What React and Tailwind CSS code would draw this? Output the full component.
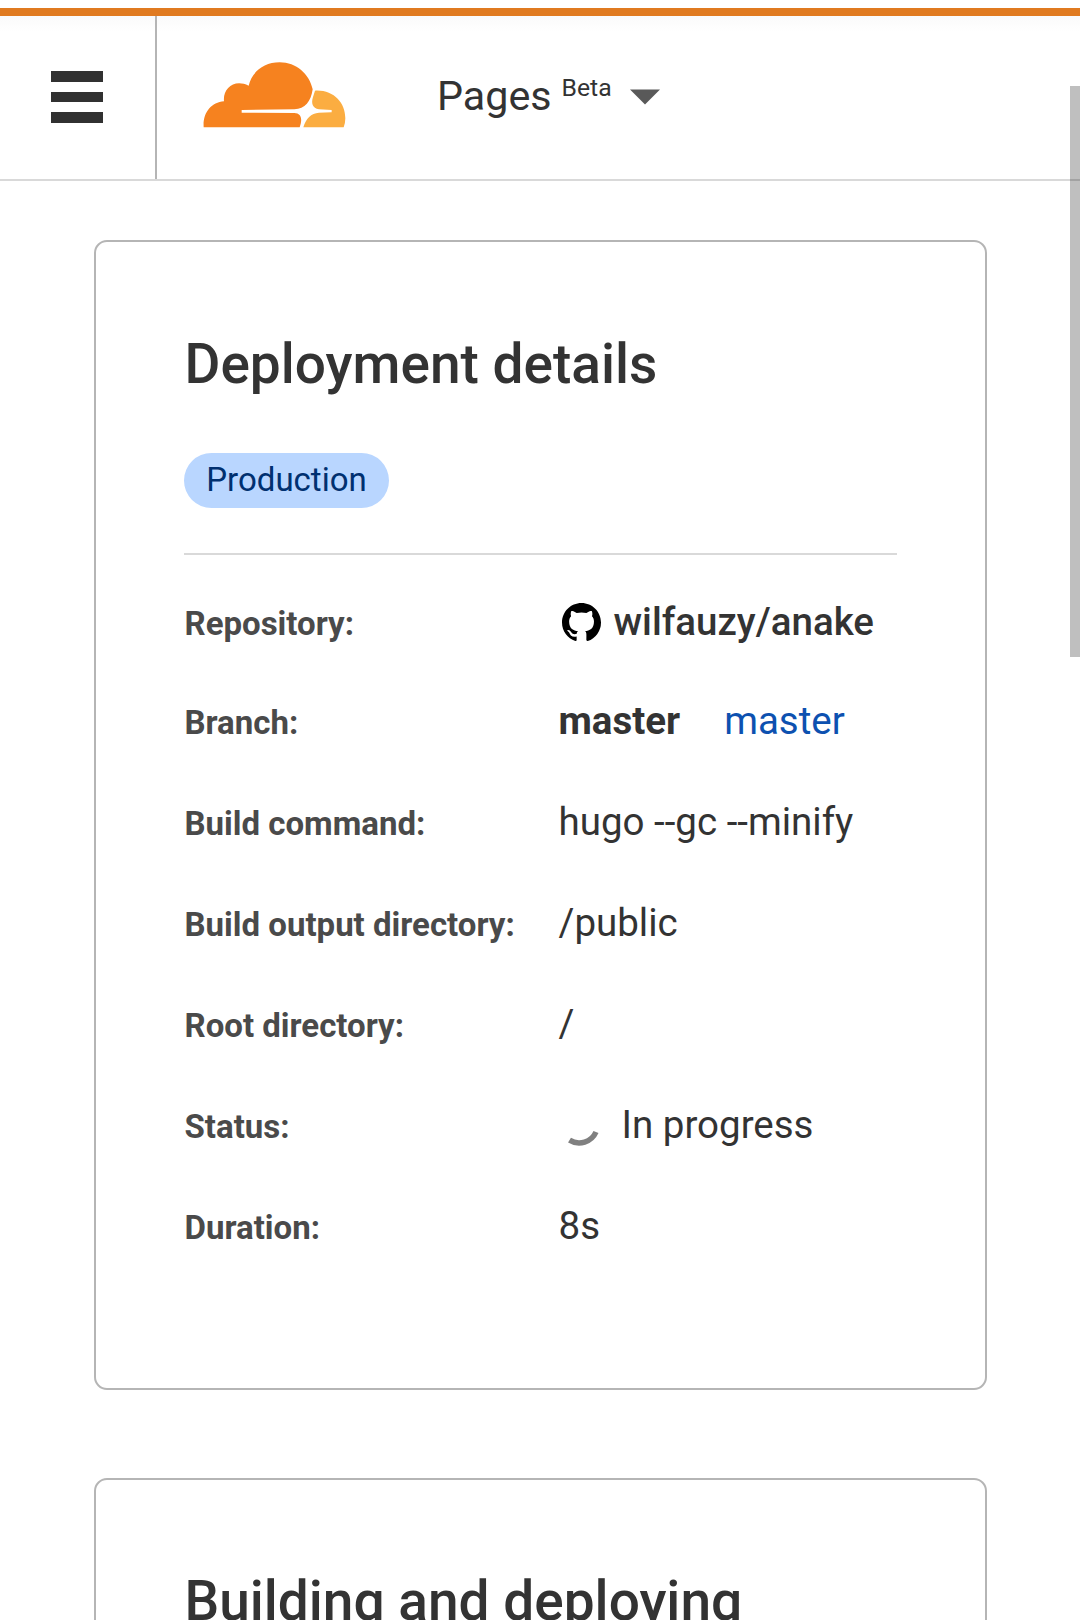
const rows = [
  ["Build command:", "hugo --gc --minify"],
  ["Build output directory:", "/public"],
  ["Root directory:", "/"],
];

function Logo() {
  return (
    <svg className="ml-[46px] mt-[46px] h-[66px] w-[144px] shrink-0" viewBox="610 184 432 198">
      <path
        fill="#f6821f"
        d="M612 380C609 337 634 305 673 302C669 263 704 233 747 255C756 215 792 185 840 185C890 185 929 220 939 266C934 302 916 325 884 326L726 328V336L884 337C905 338 909 355 900 380Z"
      />
      <path
        fill="#fbad41"
        d="M946 270C1002 267 1037 306 1037 353Q1037 367 1032 380H911C919 353 934 338 958 336L996 335V328L958 326C938 323 934 307 940 289Z"
      />
    </svg>
  );
}

function Row({ label, children, height = "h-[101px]" }) {
  return (
    <div className={`flex items-start ${height}`}>
      <div className="w-[374.5px] shrink-0 pt-[2px] pl-[0.5px] text-[33px] leading-[44px] font-bold whitespace-nowrap text-[#4a4a4a]">{label}</div>
      <div className="flex text-[38.5px] leading-[44px] whitespace-nowrap">{children}</div>
    </div>
  );
}

export default function App() {
  return (
    <div className="relative h-[1620px] w-[1080px] overflow-hidden bg-white font-['Roboto',sans-serif] text-[#333333]">
      <div className="mt-2 h-2 bg-[#e07a20]" />
      <header className="flex h-[165px] border-b-2 border-[#d9d9d9] bg-linear-to-b from-[#fafafa] to-white to-10%">
        <div className="flex w-[157px] shrink-0 flex-col gap-[10px] border-r-2 border-[#b5b5b5] pt-[55px] pl-[51px]">
          <div className="h-[10.5px] w-[52px] bg-[#313131]" />
          <div className="h-[10.5px] w-[52px] bg-[#313131]" />
          <div className="h-[10.5px] w-[52px] bg-[#313131]" />
        </div>
        <Logo />
        <div className="ml-[90px] flex">
          <span className="mt-[56px] text-[41.25px] leading-[49px]">Pages</span>
          <span className="mt-[56px] ml-[10px] text-[24.75px] leading-[32px]">Beta</span>
          <svg className="mt-[73px] ml-[18px] h-[16px] w-[30px]" viewBox="0 0 30 16">
            <path d="M0 0.5H30L15 15.5Z" fill="#595959" />
          </svg>
        </div>
      </header>

      <main className="flex flex-col gap-[88px] pt-[59px] pl-[94px]">
        <section className="h-[1150px] w-[893px] shrink-0 rounded-[13px] border-2 border-[#b5b5b5] px-[88px] pt-[89px]">
          <h1 className="pl-[0.5px] text-[55px] leading-[66px] font-medium">Deployment details</h1>
          <div className="mt-[56px] flex h-[55px] w-[205px] items-center justify-center rounded-full bg-[#b9d6ff] pb-[2px] text-[33px] text-[#003070]">
            Production
          </div>
          <div className="mt-[45px] h-[2px] bg-[#d9d9d9]" />
          <div className="mt-[45px]">
            <Row label="Repository:" height="h-[99px]">
              <svg className="mt-[3px] mr-[13px] ml-[3px] h-[39px] w-[39px]" viewBox="0 0 16 16" fill="#000">
                <path d="M8 0C3.58 0 0 3.58 0 8c0 3.54 2.29 6.53 5.47 7.59.4.07.55-.17.55-.38 0-.19-.01-.82-.01-1.49-2.01.37-2.53-.49-2.69-.94-.09-.23-.48-.94-.82-1.13-.28-.15-.68-.52-.01-.53.63-.01 1.08.58 1.23.82.72 1.21 1.87.87 2.33.66.07-.52.28-.87.51-1.07-1.78-.2-3.64-.89-3.64-3.95 0-.87.31-1.59.82-2.15-.08-.2-.36-1.02.08-2.12 0 0 .67-.21 2.2.82.64-.18 1.32-.27 2-.27s1.36.09 2 .27c1.53-1.04 2.2-.82 2.2-.82.44 1.1.16 1.92.08 2.12.51.56.82 1.27.82 2.15 0 3.07-1.87 3.75-3.65 3.95.29.25.54.73.54 1.48 0 1.07-.01 1.93-.01 2.2 0 .21.15.46.55.38A8.01 8.01 0 0 0 16 8c0-4.42-3.58-8-8-8z" />
              </svg>
              <span className="font-medium">wilfauzy/anake</span>
            </Row>
            <Row label="Branch:">
              <span className="font-bold">master</span>
              <a className="ml-[44px] text-[#0d51b0]">master</a>
            </Row>
            {rows.map(([label, value]) => (
              <Row key={label} label={label}>{value}</Row>
            ))}
            <Row label="Status:">
              <svg className="mr-[18px] h-[45px] w-[45px]" viewBox="0 0 45 45" fill="none">
                <path d="M10.5 37.2A18.4 18.4 0 0 0 37 29" stroke="#808080" strokeWidth="5.5" />
              </svg>
              <span>In progress</span>
            </Row>
            <Row label="Duration:">8s</Row>
          </div>
        </section>
        <section className="h-[400px] w-[893px] shrink-0 rounded-[13px] border-2 border-[#b5b5b5] px-[88px] pt-[88px]">
          <h2 className="pl-[0.5px] text-[55px] leading-[66px] font-medium">Building and deploying</h2>
        </section>
      </main>

      <div className="absolute top-[86px] right-0 h-[571px] w-[10px] bg-black/25" />
    </div>
  );
}
